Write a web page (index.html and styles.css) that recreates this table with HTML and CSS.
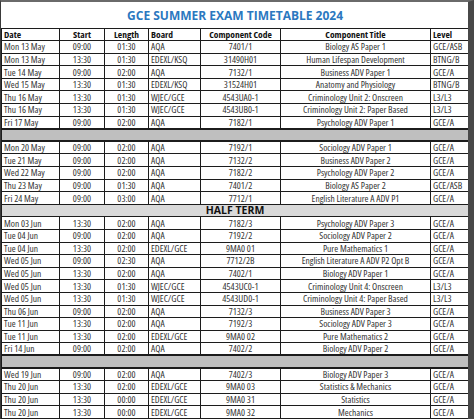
FILE: index.html
```html
<!DOCTYPE html>
<html>
<head>
<meta charset="utf-8">
<link rel="stylesheet" href="styles.css">
</head>
<body>
<div class="sheet">
<table class="tt">
<colgroup>
<col class="w-date"><col class="w-start"><col class="w-len"><col class="w-board"><col class="w-code"><col class="w-title"><col class="w-level">
</colgroup>
<tbody>
<tr class="title-row"><td colspan="7">GCE SUMMER EXAM TIMETABLE 2024</td></tr>
<tr class="head"><td class="l">Date</td><td class="c">Start</td><td class="c">Length</td><td class="l">Board</td><td class="c">Component Code</td><td class="c">Component Title</td><td class="l">Level</td></tr>
<tr><td class="l">Mon 13 May</td><td class="c">09:00</td><td class="c">01:30</td><td class="l">AQA</td><td class="c">7401/1</td><td class="c">Biology AS Paper 1</td><td class="l">GCE/ASB</td></tr>
<tr><td class="l">Mon 13 May</td><td class="c">13:30</td><td class="c">01:30</td><td class="l">EDEXL/KSQ</td><td class="c">31490H01</td><td class="c">Human Lifespan Development</td><td class="l">BTNG/B</td></tr>
<tr><td class="l">Tue 14 May</td><td class="c">09:00</td><td class="c">02:00</td><td class="l">AQA</td><td class="c">7132/1</td><td class="c">Business ADV Paper 1</td><td class="l">GCE/A</td></tr>
<tr><td class="l">Wed 15 May</td><td class="c">13:30</td><td class="c">01:30</td><td class="l">EDEXL/KSQ</td><td class="c">31524H01</td><td class="c">Anatomy and Physiology</td><td class="l">BTNG/B</td></tr>
<tr><td class="l">Thu 16 May</td><td class="c">13:30</td><td class="c">01:30</td><td class="l">WJEC/GCE</td><td class="c">4543UA0-1</td><td class="c">Criminology Unit 2: Onscreen</td><td class="l">L3/L3</td></tr>
<tr><td class="l">Thu 16 May</td><td class="c">13:30</td><td class="c">01:30</td><td class="l">WJEC/GCE</td><td class="c">4543UB0-1</td><td class="c">Criminology Unit 2: Paper Based</td><td class="l">L3/L3</td></tr>
<tr><td class="l">Fri 17 May</td><td class="c">09:00</td><td class="c">02:00</td><td class="l">AQA</td><td class="c">7182/1</td><td class="c">Psychology ADV Paper 1</td><td class="l">GCE/A</td></tr>
<tr class="gap"><td colspan="7"></td></tr>
<tr><td class="l">Mon 20 May</td><td class="c">09:00</td><td class="c">02:00</td><td class="l">AQA</td><td class="c">7192/1</td><td class="c">Sociology ADV Paper 1</td><td class="l">GCE/A</td></tr>
<tr><td class="l">Tue 21 May</td><td class="c">09:00</td><td class="c">02:00</td><td class="l">AQA</td><td class="c">7132/2</td><td class="c">Business ADV Paper 2</td><td class="l">GCE/A</td></tr>
<tr><td class="l">Wed 22 May</td><td class="c">09:00</td><td class="c">02:00</td><td class="l">AQA</td><td class="c">7182/2</td><td class="c">Psychology ADV Paper 2</td><td class="l">GCE/A</td></tr>
<tr><td class="l">Thu 23 May</td><td class="c">09:00</td><td class="c">01:30</td><td class="l">AQA</td><td class="c">7401/2</td><td class="c">Biology AS Paper 2</td><td class="l">GCE/ASB</td></tr>
<tr><td class="l">Fri 24 May</td><td class="c">09:00</td><td class="c">03:00</td><td class="l">AQA</td><td class="c">7712/1</td><td class="c">English Literature A ADV P1</td><td class="l">GCE/A</td></tr>
<tr class="half"><td colspan="7">HALF TERM</td></tr>
<tr><td class="l">Mon 03 Jun</td><td class="c">13:30</td><td class="c">02:00</td><td class="l">AQA</td><td class="c">7182/3</td><td class="c">Psychology ADV Paper 3</td><td class="l">GCE/A</td></tr>
<tr><td class="l">Tue 04 Jun</td><td class="c">09:00</td><td class="c">02:00</td><td class="l">AQA</td><td class="c">7192/2</td><td class="c">Sociology ADV Paper 2</td><td class="l">GCE/A</td></tr>
<tr><td class="l">Tue 04 Jun</td><td class="c">13:30</td><td class="c">02:00</td><td class="l">EDEXL/GCE</td><td class="c">9MA0 01</td><td class="c">Pure Mathematics 1</td><td class="l">GCE/A</td></tr>
<tr><td class="l">Wed 05 Jun</td><td class="c">09:00</td><td class="c">02:30</td><td class="l">AQA</td><td class="c">7712/2B</td><td class="c">English Literature A ADV P2 Opt B</td><td class="l">GCE/A</td></tr>
<tr><td class="l">Wed 05 Jun</td><td class="c">13:30</td><td class="c">02:00</td><td class="l">AQA</td><td class="c">7402/1</td><td class="c">Biology ADV Paper 1</td><td class="l">GCE/A</td></tr>
<tr><td class="l">Wed 05 Jun</td><td class="c">13:30</td><td class="c">01:30</td><td class="l">WJEC/GCE</td><td class="c">4543UC0-1</td><td class="c">Criminology Unit 4: Onscreen</td><td class="l">L3/L3</td></tr>
<tr><td class="l">Wed 05 Jun</td><td class="c">13:30</td><td class="c">01:30</td><td class="l">WJEC/GCE</td><td class="c">4543UD0-1</td><td class="c">Criminology Unit 4: Paper Based</td><td class="l">L3/L3</td></tr>
<tr><td class="l">Thu 06 Jun</td><td class="c">09:00</td><td class="c">02:00</td><td class="l">AQA</td><td class="c">7132/3</td><td class="c">Business ADV Paper 3</td><td class="l">GCE/A</td></tr>
<tr><td class="l">Tue 11 Jun</td><td class="c">13:30</td><td class="c">02:00</td><td class="l">AQA</td><td class="c">7192/3</td><td class="c">Sociology ADV Paper 3</td><td class="l">GCE/A</td></tr>
<tr><td class="l">Tue 11 Jun</td><td class="c">13:30</td><td class="c">02:00</td><td class="l">EDEXL/GCE</td><td class="c">9MA0 02</td><td class="c">Pure Mathematics 2</td><td class="l">GCE/A</td></tr>
<tr><td class="l">Fri 14 Jun</td><td class="c">09:00</td><td class="c">02:00</td><td class="l">AQA</td><td class="c">7402/2</td><td class="c">Biology ADV Paper 2</td><td class="l">GCE/A</td></tr>
<tr class="gap"><td colspan="7"></td></tr>
<tr><td class="l">Wed 19 Jun</td><td class="c">09:00</td><td class="c">02:00</td><td class="l">AQA</td><td class="c">7402/3</td><td class="c">Biology ADV Paper 3</td><td class="l">GCE/A</td></tr>
<tr><td class="l">Thu 20 Jun</td><td class="c">13:30</td><td class="c">02:00</td><td class="l">EDEXL/GCE</td><td class="c">9MA0 03</td><td class="c">Statistics &amp; Mechanics</td><td class="l">GCE/A</td></tr>
<tr><td class="l">Thu 20 Jun</td><td class="c">13:30</td><td class="c">00:00</td><td class="l">EDEXL/GCE</td><td class="c">9MA0 31</td><td class="c">Statistics</td><td class="l">GCE/A</td></tr>
<tr><td class="l">Thu 20 Jun</td><td class="c">13:30</td><td class="c">00:00</td><td class="l">EDEXL/GCE</td><td class="c">9MA0 32</td><td class="c">Mechanics</td><td class="l">GCE/A</td></tr>
</tbody>
</table>
</div>
</body>
</html>
```
FILE: styles.css
```css
html, body {
  margin: 0;
  padding: 0;
  background: #ffffff;
}
.sheet {
  width: 474px;
  height: 419px;
  box-sizing: border-box;
  border-top: 2px solid #6a6a6a;
  border-left: 1px solid #3a3a3a;
  border-right: 6px solid #484848;
  overflow: hidden;
  background: #ffffff;
}
.tt {
  width: 467px;
  table-layout: fixed;
  border-collapse: collapse;
  font-family: "Open Sans", "Liberation Sans", sans-serif;
  font-stretch: 86%;
  font-size: 9.5px;
  color: #333333;
}
.w-date { width: 58px; }
.w-start { width: 45px; }
.w-len { width: 44px; }
.w-board { width: 52px; }
.w-code { width: 80px; }
.w-title { width: 150px; }
.w-level { width: 38px; }
.tt tr { height: 12.6px; }
.tt td {
  padding: 0;
  line-height: 11px;
  white-space: nowrap;
  overflow: hidden;
  border: 1px solid #1c1c1c;
  vertical-align: middle;
}
.tt td.l { text-align: left; padding-left: 2px; }
.tt td.c { text-align: center; }
.tt tr.title-row { height: 26px; }
.tt tr.title-row td {
  border-top: none;
  border-left: none;
  border-right: none;
  text-align: center;
  font-weight: 700;
  font-stretch: 100%;
  font-size: 12px;
  color: #2b78bf;
  padding-top: 2px;
}
.tt tr.head td {
  font-weight: 700;
  color: #111111;
}
.tt tr.gap td {
  background: #bfbfbf;
  border-top: 2px solid #1c1c1c;
  border-bottom: 2px solid #1c1c1c;
}
.tt tr.half td {
  background: #d9d9d9;
  text-align: center;
  font-weight: 700;
  font-stretch: 95%;
  font-size: 10.5px;
  color: #111111;
}
```
